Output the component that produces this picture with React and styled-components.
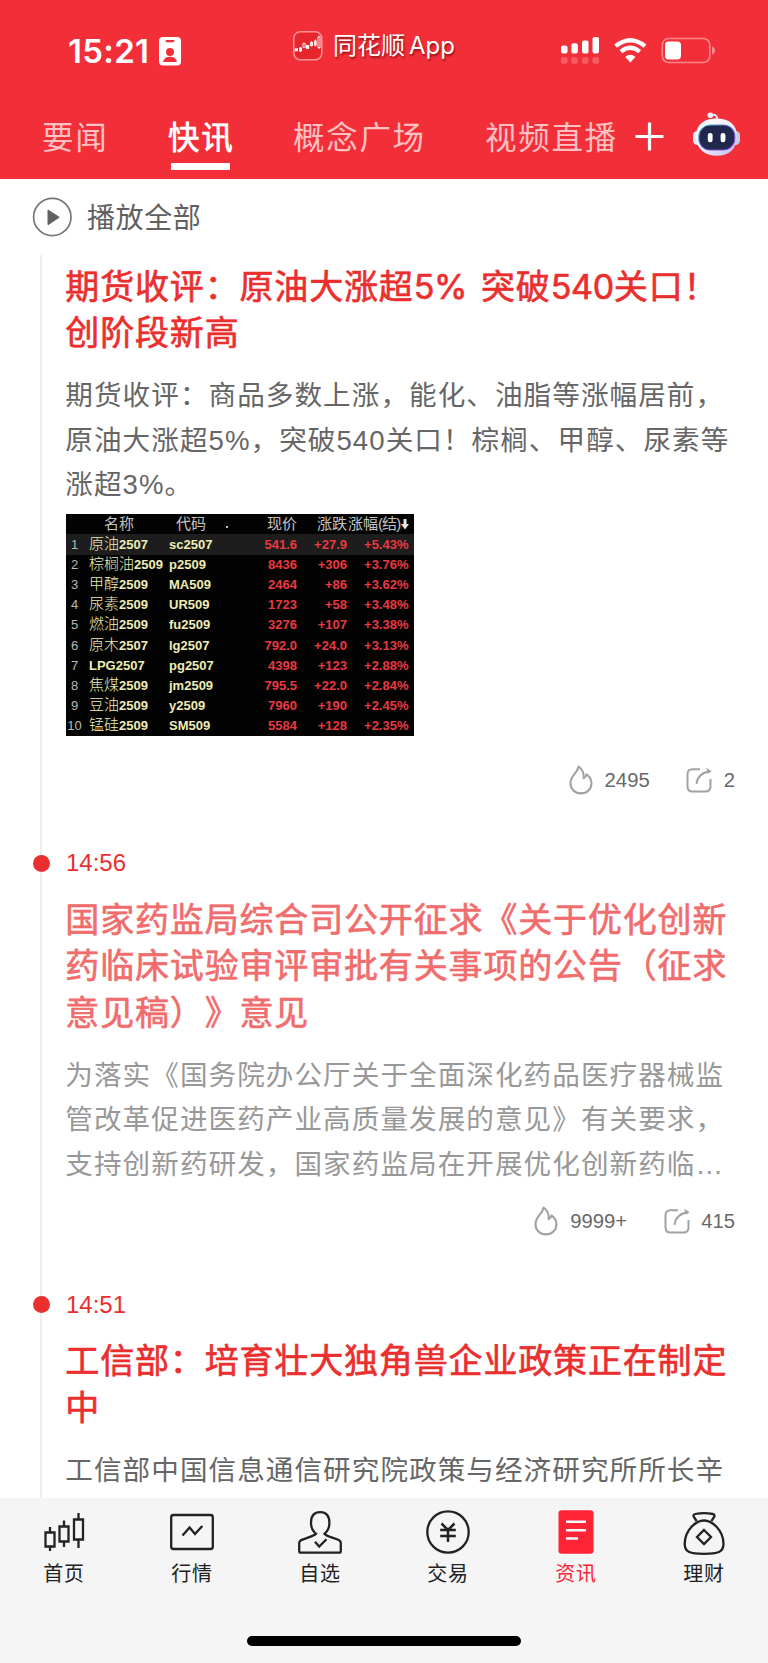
import React from 'react';
import styled, { createGlobalStyle } from 'styled-components';

const GlobalStyle = createGlobalStyle`
    * { box-sizing: border-box; }
    body { margin: 0; background: #fff; text-spacing-trim: space-all; }
    h2, p { margin: 0; font-weight: 400; }
    svg { display: block; flex: none; overflow: visible; }
`

const quotes = [
    ['原油', '2507', 'sc2507', '541.6', '+27.9', '+5.43%'],
    ['棕榈油', '2509', 'p2509', '8436', '+306', '+3.76%'],
    ['甲醇', '2509', 'MA509', '2464', '+86', '+3.62%'],
    ['尿素', '2509', 'UR509', '1723', '+58', '+3.48%'],
    ['燃油', '2509', 'fu2509', '3276', '+107', '+3.38%'],
    ['原木', '2507', 'lg2507', '792.0', '+24.0', '+3.13%'],
    ['', 'LPG2507', 'pg2507', '4398', '+123', '+2.88%'],
    ['焦煤', '2509', 'jm2509', '795.5', '+22.0', '+2.84%'],
    ['豆油', '2509', 'y2509', '7960', '+190', '+2.45%'],
    ['锰硅', '2509', 'SM509', '5584', '+128', '+2.35%'],
];

const App = () => {
    return (
        <Page>
            <GlobalStyle />
            <Header>
                <StatusBar>
                    <Clock>15:21</Clock>
                    <IdBadge />
                    <Island>
                        <AppLogo />
                        <AppName>同花顺<AppLatin>App</AppLatin></AppName>
                    </Island>
                    <Signals />
                </StatusBar>
                <TabBar>
                    <Tab width="126px">要闻</Tab>
                    <Tab width="125px" $active>快讯</Tab>
                    <Tab width="192px">概念广场</Tab>
                    <Tab width="150px">视频直播</Tab>
                    <PlusIcon />
                    <RobotIcon />
                </TabBar>
            </Header>
            <PlayAll>
                <PlayIcon />
                播放全部
            </PlayAll>
            <Feed>
                <Article height="585px">
                    <Title $top="6.5px">
                        <Line>期货收评：原油大涨超<Num>5% </Num>突破<Num>540</Num>关口！</Line>
                        <Line>创阶段新高</Line>
                    </Title>
                    <Summary>
                        <Line>期货收评：商品多数上涨，能化、油脂等涨幅居前，</Line>
                        <Line>原油大涨超5%，突破540关口！棕榈、甲醇、尿素等</Line>
                        <Line>涨超3%。</Line>
                    </Summary>
                    <QuoteTable />
                    <Stats hot="2495" share="2" top="29px" />
                </Article>
                <Article height="441.5px">
                    <Time>14:56</Time>
                    <Title $read>
                        <Line>国家药监局综合司公开征求《关于优化创新</Line>
                        <Line>药临床试验审评审批有关事项的公告（征求</Line>
                        <Line>意见稿）》意见</Line>
                    </Title>
                    <Summary $read>
                        <Line>为落实《国务院办公厅关于全面深化药品医疗器械监</Line>
                        <Line>管改革促进医药产业高质量发展的意见》有关要求，</Line>
                        <Line>支持创新药研发，国家药监局在开展优化创新药临…</Line>
                    </Summary>
                    <Stats hot="9999+" share="415" top="18.8px" />
                </Article>
                <Article height="220px">
                    <Time>14:51</Time>
                    <Title>
                        <Line>工信部：培育壮大独角兽企业政策正在制定</Line>
                        <Line>中</Line>
                    </Title>
                    <Summary>
                        <Line>工信部中国信息通信研究院政策与经济研究所所长辛</Line>
                    </Summary>
                </Article>
            </Feed>
            <BottomNav>
                <NavItem><HomeIcon />首页</NavItem>
                <NavItem><MarketIcon />行情</NavItem>
                <NavItem><WatchIcon />自选</NavItem>
                <NavItem><TradeIcon />交易</NavItem>
                <NavItem $active><NewsIcon />资讯</NavItem>
                <NavItem><WealthIcon />理财</NavItem>
                <HomeBar />
            </BottomNav>
        </Page>
    );
};

export default App;

const QuoteTable = () => (
    <Table>
        <HeadRow>
            <span />
            <HeadCell $pad="15px">名称</HeadCell>
            <HeadCell $pad="7px">代码</HeadCell>
            <HeadCell $right>现价</HeadCell>
            <HeadCell $right>涨跌</HeadCell>
            <HeadCell $right>
                涨幅<Tight>(结)</Tight>
                <svg width="8" height="11" viewBox="0 0 8 11"><path d="M2.5 0h3v5H8L4 10.5 0 5h2.5z" fill="#e4e4e4" /></svg>
            </HeadCell>
            <SortDot />
        </HeadRow>
        {quotes.map((q, i) => (
            <Row key={q[2]} $first={i === 0}>
                <Index>{i + 1}</Index>
                <Name><Cjk>{q[0]}</Cjk>{q[1]}</Name>
                <Name>{q[2]}</Name>
                <Price>{q[3]}</Price>
                <Price>{q[4]}</Price>
                <Price>{q[5]}</Price>
            </Row>
        ))}
    </Table>
);

const Stats = ({ hot, share, top }) => (
    <StatRow $top={top}>
        <svg width="24" height="30" viewBox="0 0 24 30" fill="none" stroke="#a2a2a2" strokeWidth="2.1" strokeLinejoin="round">
            <path d="M9.6 1.5C13.6 4.2 15 7.8 14.7 13.2C16.3 12.2 17.2 11.2 17.5 9.4C20.9 12 22.5 14.8 22.5 18C22.5 24 18 28.4 12 28.4C6 28.4 1.5 24 1.5 18.2C1.5 14.6 3.1 12 5.4 9.2C7.4 6.8 9 4.5 9.6 1.5Z" />
        </svg>
        <Hot>{hot}</Hot>
        <svg width="26" height="26" viewBox="0 0 26 26" fill="none" stroke="#a2a2a2" strokeWidth="2">
            <path d="M14 2.2H6.5Q1.5 2.2 1.5 7.2V19.5Q1.5 24.5 6.5 24.5H19.5Q24.5 24.5 24.5 19.5V12" />
            <path d="M10.6 16.8C11.2 10.5 15.5 5.5 24 4.2" />
            <path d="M20.2 .8L25.6 4.3L22 6.4Z" fill="#a2a2a2" stroke="none" />
        </svg>
        <Share>{share}</Share>
    </StatRow>
);

const IdBadge = () => (
    <svg width="22" height="29" viewBox="0 0 22 29">
        <rect width="22" height="28.5" rx="4" fill="#fff" />
        <rect x="6.5" y="3" width="9" height="2.2" rx="1.1" fill="#f22f38" />
        <circle cx="11" cy="15" r="4" fill="#f22f38" />
        <path d="M4 25Q5 19.8 11 19.8T18 25Z" fill="#f22f38" />
    </svg>
);

const AppLogo = () => (
    <svg width="30" height="30" viewBox="0 0 30 30">
        <rect x=".8" y=".8" width="28" height="28" rx="6.5" fill="#e6252c" stroke="#ff9296" strokeWidth="1.5" />
        <g fill="#fff">
            <rect x="1.7" y="17.3" width="3.2" height="3" />
            <rect x="13" y="14" width="3.2" height="4" />
            <rect x="21.2" y="9.5" width="2.4" height="5" />
        </g>
        <g fill="none" stroke="#fff" strokeWidth=".9">
            <rect x="6.5" y="17" width="2" height="3" />
            <rect x="10" y="12.8" width="2.2" height="3.4" />
            <rect x="17.6" y="11.5" width="2" height="3" />
            <rect x="25" y="6" width="2" height="10.5" />
            <path d="M7.5 16v5M11 11.5v1.3M18.6 10v5.5M22.4 8.5v7M26 4.5v1.5M26 16.5v1.5" />
        </g>
    </svg>
);

const Signals = () => (
    <svg width="156" height="28" viewBox="0 0 156 28">
        <g fill="#fff">
            <rect x="0" y="8.5" width="6.5" height="8" rx="2" />
            <rect x="10.3" y="6.3" width="6.5" height="10.2" rx="2" />
            <rect x="21" y="3.5" width="6.5" height="13" rx="2" />
            <rect x="31.5" y="0" width="6.5" height="16.5" rx="2" />
        </g>
        <g fill="#fff" opacity=".22">
            <rect x="0" y="20.2" width="6.5" height="6.5" rx="2" />
            <rect x="10.3" y="20.2" width="6.5" height="6.5" rx="2" />
            <rect x="21" y="20.2" width="6.5" height="6.5" rx="2" />
            <rect x="31.5" y="20.2" width="6.5" height="6.5" rx="2" />
        </g>
        <g fill="none" stroke="#fff" strokeWidth="4.3">
            <path d="M54.6 9.2Q69.3 -2.8 84 9.2" />
            <path d="M59.9 14.6Q69.3 6.8 78.7 14.6" />
        </g>
        <path d="M64.2 20Q69.3 15.6 74.4 20L69.3 25.6Z" fill="#fff" />
        <rect x="101.3" y="1.5" width="47.5" height="24" rx="6.5" fill="none" stroke="#fff" strokeWidth="1.6" opacity=".42" />
        <rect x="104" y="4.4" width="16" height="18" rx="3.6" fill="#fff" />
        <path d="M151 9.5Q154 10.6 154 13.5T151 17.5Z" fill="#fff" opacity=".45" />
    </svg>
);

const PlusIcon = () => (
    <svg width="29" height="29" viewBox="0 0 29 29">
        <path d="M14.5 .5V28.5M.5 14.5H28.5" stroke="#fff" strokeWidth="3.2" />
    </svg>
);

const RobotIcon = () => (
    <RobotSvg width="47" height="44" viewBox="0 0 47 44">
        <defs>
            <linearGradient id="shell" x1="0" y1="0" x2="1" y2="1">
                <stop offset="0" stopColor="#fff" />
                <stop offset=".5" stopColor="#f1f1fb" />
                <stop offset="1" stopColor="#b9b9ea" />
            </linearGradient>
            <linearGradient id="rim" x1="0" y1="0" x2="1" y2="1">
                <stop offset="0" stopColor="#63dbe5" />
                <stop offset=".5" stopColor="#5455c8" />
                <stop offset="1" stopColor="#a44fe5" />
            </linearGradient>
        </defs>
        <path d="M17.5 3.2Q24 1.4 24.2 7" fill="none" stroke="#f3e8f2" strokeWidth="2" />
        <circle cx="17.3" cy="3.3" r="2.8" fill="#f5eff8" />
        <rect x="0" y="19" width="9" height="14" rx="4.5" fill="#e8e8f8" />
        <rect x="38" y="19" width="9" height="14" rx="4.5" fill="#c9c9ec" />
        <path d="M3 24C3 12 12 6.5 23.5 6.5S44 12 44 24C44 37 36 43.7 24 43.7S3 37 3 24Z" fill="url(#shell)" />
        <rect x="5.8" y="13" width="36" height="25" rx="11.5" fill="#20284d" stroke="url(#rim)" strokeWidth="1.1" />
        <rect x="14.8" y="21" width="4.8" height="9.2" rx="2.2" fill="#fff" />
        <rect x="27.6" y="21" width="4.8" height="9.2" rx="2.2" fill="#fff" />
    </RobotSvg>
);

const PlayIcon = () => (
    <svg width="40" height="40" viewBox="0 0 40 40">
        <circle cx="19.3" cy="20" r="18.7" fill="none" stroke="#777" strokeWidth="1.7" />
        <path d="M15 13L26.2 20.3L15 27.7Z" fill="#606060" stroke="#606060" strokeLinejoin="round" />
    </svg>
);

const HomeIcon = () => (
    <NavSvg viewBox="0 0 44 44" fill="none">
        <path d="M3.5 22.5h9v14h-9zM17.5 16.5h9v15h-9zM32 9.5h9v20h-9z" />
        <path d="M8 17v5.5M8 36.5v4.5M22 10.5v6M22 31.5v5.5M36.5 3v6.5M36.5 29.5V38" />
    </NavSvg>
);

const MarketIcon = () => (
    <NavSvg viewBox="0 0 44 44" fill="none">
        <rect x="1.2" y="5" width="41.6" height="34" rx="2.2" />
        <path d="M12.5 25.5L19.6 17.5L25 24L32.3 16" />
    </NavSvg>
);

const WatchIcon = () => (
    <NavSvg viewBox="0 0 44 44" fill="none">
        <path d="M18 23.8C14 20.5 13 17.8 13 13C13 5.5 16.2 2.2 22.2 2.2S31.4 5.5 31.4 13C31.4 17.8 30.4 20.5 26.5 23.8C28.5 26.5 36.5 28 41.4 30.4Q42.8 31.2 42.8 33V41Q42.8 42.7 41 42.7H3Q1.2 42.7 1.2 41V33Q1.2 31.2 2.6 30.4C7.5 28 16 26.5 18 23.8Z" />
        <path d="M17 31.8L21.2 36.5L28.5 29.2" />
    </NavSvg>
);

const TradeIcon = () => (
    <NavSvg viewBox="0 0 44 44" fill="none">
        <circle cx="22" cy="22" r="20.7" />
        <path d="M15.5 13.5L22 20L28.5 13.5M14.2 20H29.8M14.2 26H29.8M22 20V32" strokeWidth="2.5" />
    </NavSvg>
);

const NewsIcon = () => (
    <svg width="44" height="44" viewBox="0 0 44 44">
        <rect x="4.5" y=".3" width="35" height="43.4" rx="3" fill="#ff2336" />
        <path d="M12 11.8H32M12 20.2H32M12 28.5H24" stroke="#fff" strokeWidth="2.5" />
    </svg>
);

const WealthIcon = () => (
    <NavSvg viewBox="0 0 44 44" fill="none">
        <path d="M14.6 11.2L11.6 6.4Q11 4.5 13.3 4Q22 2.2 30.7 4Q33 4.5 32.4 6.4L29.4 11.2" />
        <path d="M22 10.5C30 10.5 41.5 20 41.5 34C41.5 42.2 36 43.8 22 43.8S2.7 42.2 2.7 34C2.7 20 14 10.5 22 10.5Z" />
        <path d="M22 20L29 27L22 34L15 27Z" />
    </NavSvg>
);

const Page = styled.div`
    width: 768px;
    height: 1663px;
    display: flex;
    flex-direction: column;
    overflow: hidden;
    background: #fff;
    font-family: "Liberation Sans", "Noto Sans CJK SC", sans-serif;
`
const Header = styled.header`
    flex: none;
    height: 179px;
    background: #f22f38;
    color: #fff;
`
const StatusBar = styled.div`
    height: 102px;
    padding: 37px 0 0 68px;
    display: flex;
    align-items: flex-start;
`
const Clock = styled.div`
    width: 91px;
    font: 600 33px/29px Inter, sans-serif;
    letter-spacing: 0.3px;
`
const Island = styled.div`
    width: 268px;
    margin: -8px 0 0 112px;
    display: flex;
    align-items: center;
`
const AppName = styled.span`
    margin-left: 10px;
    padding-bottom: 2px;
    font: 400 24px/30px "Noto Sans CJK SC", sans-serif;
    white-space: nowrap;
    text-shadow: 1px 2px 2px rgba(90, 0, 0, 0.6);
`
const AppLatin = styled.span`
    margin-left: 4px;
    font-family: Inter, sans-serif;
    font-size: 24px;
`
const TabBar = styled.nav`
    height: 77px;
    padding-left: 42px;
    display: flex;
    align-items: flex-start;
    svg { margin-top: 20px; }
`
const Tab = styled.div`
    flex: none;
    width: ${(props) => props.width};
    height: 68px;
    padding-top: 9px;
    font: 400 31.5px/48px "Noto Sans CJK SC", sans-serif;
    letter-spacing: 1.7px;
    color: ${(props) => (props.$active ? '#fff' : '#ffc0c3')};
    -webkit-text-stroke: ${(props) => (props.$active ? '0.7px' : '0')};
    &::after {
        content: '';
        display: ${(props) => (props.$active ? 'block' : 'none')};
        width: 59px;
        height: 7px;
        margin: 4px 0 0 3px;
        background: #fff;
    }
`
const RobotSvg = styled.svg`
    && { margin: 10px 0 0 29px; }
`
const PlayAll = styled.div`
    flex: none;
    height: 76px;
    padding: 18px 0 0 33px;
    display: flex;
    gap: 14px;
    font-size: 28px;
    line-height: 43px;
    letter-spacing: 0.6px;
    color: #606060;
`
const Feed = styled.main`
    flex: none;
    height: 1243px;
    margin-left: 40px;
    border-left: 2px solid #eee;
    padding-left: 24px;
    overflow: visible;
`
const Article = styled.article`
    height: ${(props) => props.height};
`
const Time = styled.div`
    position: relative;
    height: 46px;
    font-size: 24px;
    line-height: 46px;
    color: #eb2e2e;
    &::before {
        content: '';
        position: absolute;
        left: -33.5px;
        top: 14.5px;
        width: 17px;
        height: 17px;
        border-radius: 50%;
        background: #eb2e2e;
    }
`
const Title = styled.h2`
    padding-top: ${(props) => props.$top || '8.7px'};
    margin-left: -0.7px;
    font: 400 34px/46.5px "Noto Sans CJK SC", sans-serif;
    letter-spacing: 0.84px;
    color: ${(props) => (props.$read ? '#f16d6d' : '#eb2e2e')};
    -webkit-text-stroke: 0.65px;
`
const Num = styled.span`
    font-family: Inter, sans-serif;
    line-height: 1;
    letter-spacing: -0.3px;
    word-spacing: 4.5px;
    white-space: pre;
`
const Summary = styled.div`
    margin-left: -0.7px;
    padding-top: 19.5px;
    font-size: 27.6px;
    line-height: 44.6px;
    letter-spacing: 1.05px;
    color: ${(props) => (props.$read ? '#989898' : '#666')};
`
const Line = styled.p`
    white-space: nowrap;
`
const StatRow = styled.div`
    height: 30px;
    margin-top: ${(props) => props.$top};
    padding-right: 33px;
    display: flex;
    justify-content: flex-end;
    align-items: center;
    font-size: 20.3px;
    color: #686868;
`
const Hot = styled.span`
    margin: 0 36.5px 0 12px;
`
const Share = styled.span`
    margin-left: 11.5px;
`
const Table = styled.div`
    width: 348px;
    height: 222px;
    margin-top: 6.5px;
    overflow: hidden;
    background: #030303;
`
const Row = styled.div`
    height: 20.2px;
    display: grid;
    grid-template-columns: 23px 80px 61px 67px 50px 61.5px;
    align-items: center;
    background: ${(props) => (props.$first ? '#1d1d1d' : 'transparent')};
    font-weight: 700;
    font-size: 13px;
    line-height: 20px;
    white-space: nowrap;
`
const HeadRow = styled(Row)`
    position: relative;
`
const HeadCell = styled.span`
    display: flex;
    align-items: center;
    justify-content: ${(props) => (props.$right ? 'flex-end' : 'flex-start')};
    padding-left: ${(props) => props.$pad || 0};
    font-weight: 400;
    font-size: 15px;
    color: #c4c4c4;
`
const Tight = styled.span`
    letter-spacing: -0.8px;
`
const SortDot = styled.i`
    position: absolute;
    left: 160px;
    top: 12px;
    width: 2px;
    height: 2px;
    background: #c4c4c4;
`
const Index = styled.span`
    padding-right: 6px;
    text-align: center;
    font-weight: 400;
    color: #b8b8b8;
`
const Name = styled.span`
    color: #eeedb5;
`
const Cjk = styled.span`
    font-weight: 300;
    font-size: 15px;
    line-height: 1;
`
const Price = styled.span`
    text-align: right;
    color: #ea3940;
`
const BottomNav = styled.nav`
    position: relative;
    flex: none;
    height: 165px;
    display: grid;
    grid-template-columns: repeat(6, 128px);
    background: #f5f5f5;
`
const NavItem = styled.div`
    padding-top: 12px;
    display: flex;
    flex-direction: column;
    align-items: center;
    font-size: 20px;
    line-height: 40px;
    letter-spacing: 0.8px;
    color: ${(props) => (props.$active ? '#ff2336' : '#222')};
`
const NavSvg = styled.svg`
    width: 44px;
    height: 44px;
    stroke: #222;
    stroke-width: 2.3px;
`
const HomeBar = styled.div`
    position: absolute;
    left: 247px;
    bottom: 17px;
    width: 274px;
    height: 10px;
    border-radius: 5px;
    background: #000;
`
